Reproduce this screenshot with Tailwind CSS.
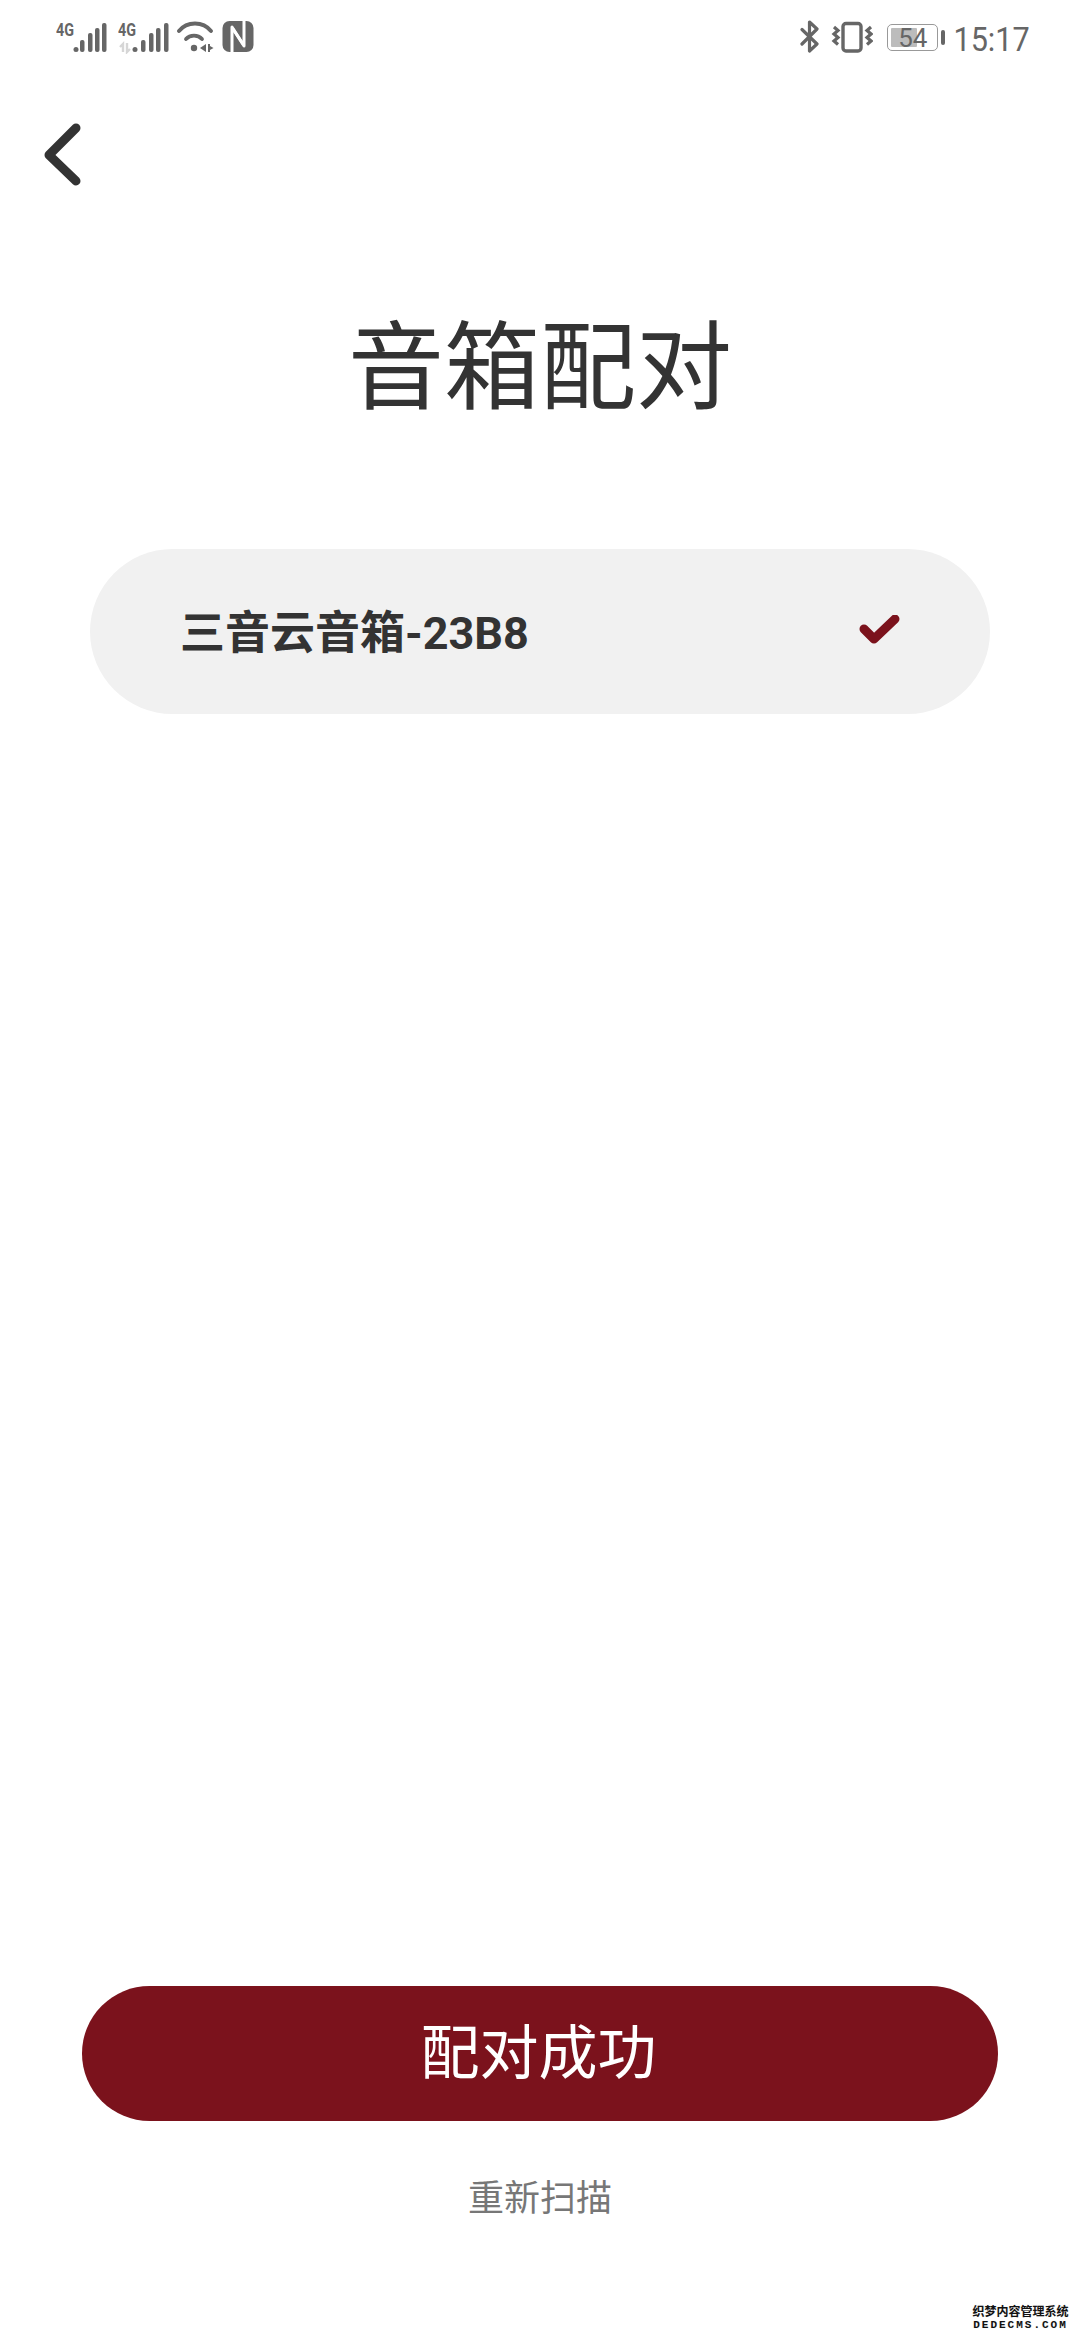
<!DOCTYPE html>
<html lang="zh">
<head>
<meta charset="utf-8">
<script src="https://cdn.jsdelivr.net/npm/@tailwindcss/browser@4"></script>
</head>
<body class="bg-white">
<div class="relative flex h-[2340px] w-[1080px] flex-col overflow-hidden bg-white font-['Roboto','Noto_Sans_CJK_SC',sans-serif]">
  <!-- status bar -->
  <div class="flex h-[72px] items-start justify-between pl-[56px] pr-[50px] pt-[20px] text-[#666]">
    <div class="flex items-start">
      <svg class="h-[34px] w-[52px]" viewBox="56 20 52 34"><text x="56" y="35.500" font-family="Roboto" font-weight="700" font-size="18" textLength="18" lengthAdjust="spacingAndGlyphs" fill="#666">4G</text><g fill="#666"><circle cx="76" cy="49.500" r="2.500"/><rect x="80" y="40" width="4.500" height="12" rx="2"/><rect x="88" y="33" width="4.500" height="19" rx="2"/><rect x="95" y="28" width="4.500" height="24" rx="2"/><rect x="102" y="23" width="4.500" height="29" rx="2"/></g></svg>
      <svg class="ml-[10px] h-[34px] w-[52px]" viewBox="118 20 52 34"><text x="118" y="35.500" font-family="Roboto" font-weight="700" font-size="18" textLength="18" lengthAdjust="spacingAndGlyphs" fill="#666">4G</text><g fill="none" stroke="#d6d6d6" stroke-width="2.400"><path d="M123 52V44l-3 3"/><path d="M127 43v9l3-3"/></g><g fill="#666"><circle cx="135" cy="49.500" r="2.500"/><rect x="141" y="40" width="4.500" height="12" rx="2"/><rect x="149" y="33" width="4.500" height="19" rx="2"/><rect x="156" y="28" width="4.500" height="24" rx="2"/><rect x="164" y="23" width="4.500" height="29" rx="2"/></g></svg>
      <svg class="ml-[7px] h-[34px] w-[37px]" viewBox="177 20 37 34"><g fill="none" stroke="#666" stroke-width="3.800" stroke-linecap="round"><path d="M179 31C187 21 203 21 211 31"/><path d="M186 39C190 34.500 198 34.500 202 39"/></g><circle cx="194" cy="48" r="3.200" fill="#666"/><path d="M206 44v8l-6-4zM208 44h2v8h-2zM210 46l3.500 2-3.500 2z" fill="#666"/></svg>
      <svg class="ml-[8px] h-[34px] w-[32px]" viewBox="222 20 32 34"><rect x="222.500" y="21" width="31" height="31" rx="7" fill="#666"/><g fill="none" stroke="#fff" stroke-width="3" stroke-linejoin="round"><path d="M232 53V27l11 17"/><path d="M244 20v26L233 29"/></g></svg>
    </div>
    <div class="flex items-start">
      <svg class="h-[34px] w-[20px]" viewBox="799 20 20 34"><path d="M801 29.500L816 44 808.500 51V22L816 29 801 44" fill="none" stroke="#666" stroke-width="3.200" stroke-linecap="round" stroke-linejoin="round"/></svg>
      <svg class="ml-[11px] h-[34px] w-[42px]" viewBox="830 20 42 34"><rect x="842" y="23.500" width="18" height="27.500" rx="3" fill="none" stroke="#666" stroke-width="3.400"/><g fill="none" stroke="#666" stroke-width="3.200"><path d="M833 27l4 3.500-4 3.500 4 3.500-4 3.500 4 3.500"/><path d="M870 27l-4 3.500 4 3.500-4 3.500 4 3.500-4 3.500"/></g></svg>
      <div class="relative ml-[14px] mt-[4px] flex h-[27px] w-[51px] items-center justify-center rounded-[5px] border-[1.500px] border-[#999]">
        <div class="absolute bottom-[3px] left-[3px] top-[3px] w-[26px] rounded-[1px] bg-[#bcbcbc]"></div>
        <span class="relative text-[26px] leading-none text-[#666]">54</span>
      </div>
      <div class="ml-[3px] mt-[10px] h-[15px] w-[4px] rounded-[2px] bg-[#666]"></div>
      <span class="origin-right scale-x-90 text-[34px] leading-[38px] text-[#666]">15:17</span>
    </div>
  </div>

  <!-- back -->
  <div class="pl-[44px] pt-[50px]">
    <svg class="block h-[66px] w-[40px]" viewBox="44 122 40 66"><path d="M76 128L49 155 76 181" fill="none" stroke="#333" stroke-width="9" stroke-linecap="round" stroke-linejoin="round"/></svg>
  </div>

  <!-- title -->
  <h1 class="mt-[124px] text-center text-[96px] font-normal leading-[112px] text-[#333]">音箱配对</h1>

  <!-- device row -->
  <div class="mx-[90px] mt-[125px] flex h-[165px] items-center justify-between rounded-full bg-[#f1f1f1] pl-[90px] pr-[87px] pt-[3px]">
    <span class="text-[45px] font-bold leading-none text-[#333]">三音云音箱-23B8</span>
    <svg class="h-[36px] w-[44px]" viewBox="858 618 44 36"><path d="M863 632L873 642 894 622" fill="none" stroke="#7b121c" stroke-width="9" stroke-linecap="round" stroke-linejoin="round"/></svg>
  </div>

  <div class="flex-1"></div>

  <!-- button -->
  <button class="mx-[82px] flex h-[135px] items-center justify-center rounded-full bg-[#7b121c] pr-[3px] text-[59px] leading-none text-white">配对成功</button>
  <div class="mb-[120px] mt-[57px] text-center text-[36px] leading-[42px] text-[#777]">重新扫描</div>

  <!-- watermark -->
  <div class="absolute bottom-[9px] right-[11px] flex w-[97px] flex-col items-center text-[#111] [text-shadow:0_0_2px_#fff,0_0_1px_#ccc]">
    <span class="text-[12px] font-bold leading-[13px] whitespace-nowrap">织梦内容管理系统</span>
    <span class="mt-[1px] font-['Liberation_Mono',monospace] text-[11px] font-bold leading-[11px] tracking-[2px] whitespace-nowrap">DEDECMS.COM</span>
  </div>
</div>
</body>
</html>
